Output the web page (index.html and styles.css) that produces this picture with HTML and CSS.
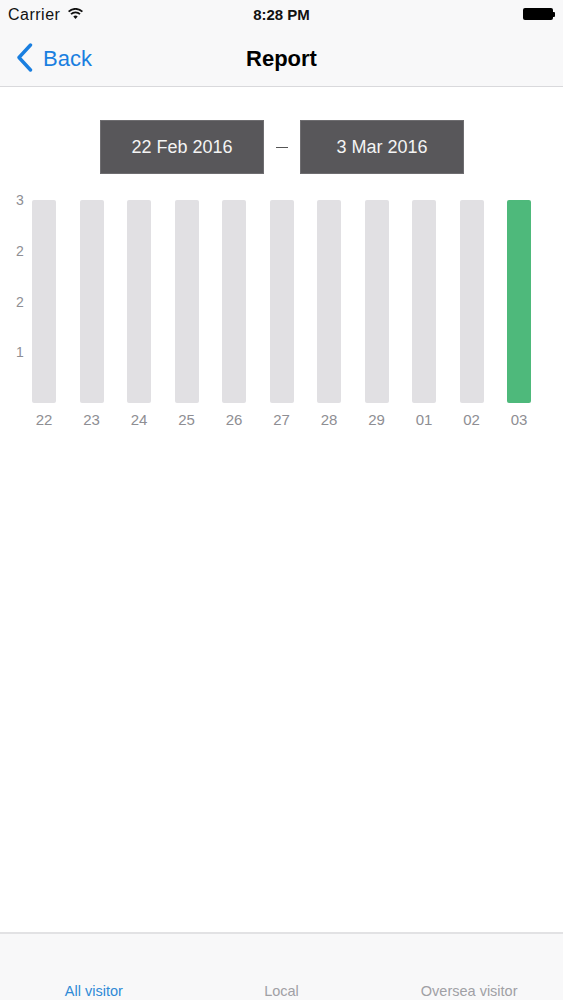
FILE: index.html
```html
<!DOCTYPE html>
<html>
<head>
    <title>Report</title>
    <link rel="stylesheet" href="styles.css">
</head>
<body>
    <div class="app">
        <div class="top-bar">
            <div class="status-bar">
                <div class="status-left">
                    <span class="carrier">Carrier</span>
                    <svg class="wifi" width="15" height="11" viewBox="0 0 15 11">
                        <path d="M0.6 3.6 A10 10 0 0 1 14.4 3.6" fill="none" stroke="#111" stroke-width="1.8"/>
                        <path d="M3 6.2 A6.5 6.5 0 0 1 12 6.2" fill="none" stroke="#111" stroke-width="1.8"/>
                        <path d="M5.3 8.6 A3.3 3.3 0 0 1 9.7 8.6 L7.5 10.9 Z" fill="#111"/>
                    </svg>
                </div>
                <div class="status-time">8:28 PM</div>
                <div class="status-right">
                    <div class="battery"></div>
                    <div class="battery-nub"></div>
                </div>
            </div>
            <div class="nav-bar">
                <a class="back-link">
                    <svg width="17" height="29" viewBox="0 0 17 29">
                        <path d="M14.5 2 L3 14.5 L14.5 27" fill="none" stroke="#1a7fe0" stroke-width="3.4" stroke-linecap="round" stroke-linejoin="round"/>
                    </svg>
                    <span>Back</span>
                </a>
                <h1>Report</h1>
            </div>
        </div>

        <div class="content">
            <div class="date-range">
                <div class="date-box">22 Feb 2016</div>
                <div class="date-dash"></div>
                <div class="date-box">3 Mar 2016</div>
            </div>

            <div class="chart">
                <div class="y-axis">
                    <div class="y-tick"><span>3</span></div>
                    <div class="y-tick"><span>2</span></div>
                    <div class="y-tick"><span>2</span></div>
                    <div class="y-tick"><span>1</span></div>
                </div>
                <div class="bars" id="bars"></div>
            </div>
        </div>

        <div class="tab-bar">
            <div class="tab active">All visitor</div>
            <div class="tab">Local</div>
            <div class="tab">Oversea visitor</div>
        </div>
    </div>

    <script>
        const days = ['22', '23', '24', '25', '26', '27', '28', '29', '01', '02', '03'];
        const barsDiv = document.getElementById('bars');

        days.forEach(function(day, i) {
            const col = document.createElement('div');
            col.className = 'bar-col';
            const bar = document.createElement('div');
            bar.className = i === days.length - 1 ? 'bar current' : 'bar';
            const label = document.createElement('div');
            label.className = 'bar-label';
            label.textContent = day;
            col.appendChild(bar);
            col.appendChild(label);
            barsDiv.appendChild(col);
        });
    </script>
</body>
</html>
```

FILE: styles.css
```css
body {
    font-family: "Liberation Sans", Arial, sans-serif;
    background-color: #fff;
    margin: 0;
    padding: 0;
}

.app {
    display: flex;
    flex-direction: column;
    height: 1000px;
}

.top-bar {
    background-color: #f8f8f9;
    border-bottom: 1px solid #d9d9dc;
}

.status-bar {
    display: flex;
    align-items: center;
    justify-content: space-between;
    height: 28px;
    padding: 0 8px;
    font-size: 16px;
    color: #111;
}

.status-left {
    display: flex;
    align-items: center;
    gap: 8px;
    width: 120px;
    padding-top: 1px;
}

.carrier {
    letter-spacing: 0.5px;
}

.wifi {
    margin-top: -3px;
}

.status-time {
    font-size: 15px;
    font-weight: bold;
}

.status-right {
    display: flex;
    align-items: center;
    justify-content: flex-end;
    width: 120px;
}

.battery {
    width: 30px;
    height: 12px;
    background-color: #000;
    border-radius: 2px;
}

.battery-nub {
    width: 2px;
    height: 5px;
    background-color: #000;
    border-radius: 0 1px 1px 0;
}

.nav-bar {
    position: relative;
    height: 58px;
    display: flex;
    align-items: center;
    justify-content: center;
}

.back-link {
    position: absolute;
    left: 16px;
    top: 15px;
    display: flex;
    align-items: center;
    gap: 10px;
    color: #1a7fe0;
    font-size: 22px;
}

.back-link span {
    padding-top: 3px;
}

.nav-bar h1 {
    margin: 0;
    font-size: 22px;
    font-weight: bold;
    color: #000;
    padding-top: 4px;
}

.content {
    flex: 1;
}

.date-range {
    display: flex;
    justify-content: center;
    align-items: center;
    margin-top: 33px;
    padding-left: 1px;
}

.date-box {
    width: 162px;
    height: 52px;
    background-color: #58575a;
    border: 1px solid #6e6d70;
    color: #f4f4f4;
    font-size: 18px;
    display: flex;
    align-items: center;
    justify-content: center;
}

.date-dash {
    width: 12px;
    height: 1px;
    background-color: #555;
    margin: 0 12px;
}

.chart {
    display: flex;
    margin-top: 26px;
    padding-left: 12px;
}

.y-axis {
    width: 16px;
    margin-right: 4px;
    color: #8e8e93;
    font-size: 14px;
}

.y-tick {
    display: flow-root;
    height: 50.75px;
    text-align: center;
}

.y-tick span {
    display: block;
    line-height: 16px;
    margin-top: -8px;
}

.bars {
    display: flex;
    gap: 23.5px;
}

.bar-col {
    width: 24px;
    display: flex;
    flex-direction: column;
    align-items: center;
}

.bar {
    width: 24px;
    height: 203px;
    background-color: #e1e0e3;
    border-radius: 2px;
}

.bar.current {
    background-color: #4eb97b;
}

.bar-label {
    margin-top: 8px;
    font-size: 15px;
    color: #8e8e93;
    white-space: nowrap;
}

.tab-bar {
    height: 66px;
    display: grid;
    grid-template-columns: 1fr 1fr 1fr;
    background-color: #f8f8f9;
    border-top: 2px solid #e2e2e4;
}

.tab {
    display: flex;
    align-items: flex-end;
    justify-content: center;
    padding-bottom: 1px;
    font-size: 14.5px;
    color: #a0a0a5;
}

.tab.active {
    color: #2f8ad6;
}
```
